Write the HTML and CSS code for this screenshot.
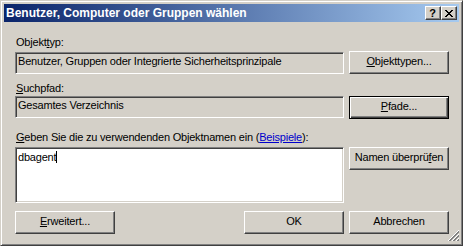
FILE: index.html
```html
<!DOCTYPE html>
<html>
<head>
<meta charset="utf-8">
<link rel="stylesheet" href="styles.css">
</head>
<body>
<div class="window">
  <div class="titlebar">
    <span class="title">Benutzer, Computer oder Gruppen wählen</span>
    <div class="tbtns">
      <div class="tbtn help">?</div>
      <div class="tbtn close">
        <svg width="8" height="7" viewBox="0 0 8 7" shape-rendering="crispEdges">
          <path fill="#000" d="M0 0h2v1H0zM6 0h2v1H6zM1 1h2v1H1zM5 1h2v1H5zM2 2h4v1H2zM3 3h2v1H3zM2 4h4v1H2zM1 5h2v1H1zM5 5h2v1H5zM0 6h2v1H0zM6 6h2v1H6z"/>
        </svg>
      </div>
    </div>
  </div>
  <div class="client">
    <div class="label l1">Objekt<u>t</u>yp:</div>
    <div class="row r1">
      <div class="field">Benutzer, Gruppen oder Integrierte Sicherheitsprinzipale</div>
      <div class="btn"><u>O</u>bjekttypen...</div>
    </div>
    <div class="label l2"><u>S</u>uchpfad:</div>
    <div class="row r2">
      <div class="field">Gesamtes Verzeichnis</div>
      <div class="btn default"><u>P</u>fade...</div>
    </div>
    <div class="label l3"><u>G</u>eben Sie die zu verwendenden Objektnamen ein (<span class="link">Beispiele</span>):</div>
    <div class="row r3">
      <div class="edit">dbagent<span class="caret"></span></div>
      <div class="btn">Namen überprü<u>f</u>en</div>
    </div>
    <div class="row r4">
      <div class="btn"><u>E</u>rweitert...</div>
      <div class="btn ok">OK</div>
      <div class="btn">Abbrechen</div>
    </div>
  </div>
  <svg class="grip" width="12" height="12" viewBox="0 0 12 12" shape-rendering="crispEdges">
    <g stroke-width="1">
      <line x1="11.5" y1="0.5" x2="0.5" y2="11.5" stroke="#fff"/>
      <line x1="11.5" y1="1.5" x2="1.5" y2="11.5" stroke="#808080"/>
      <line x1="11.5" y1="2.5" x2="2.5" y2="11.5" stroke="#808080"/>
      <line x1="11.5" y1="4.5" x2="4.5" y2="11.5" stroke="#fff"/>
      <line x1="11.5" y1="5.5" x2="5.5" y2="11.5" stroke="#808080"/>
      <line x1="11.5" y1="6.5" x2="6.5" y2="11.5" stroke="#808080"/>
      <line x1="11.5" y1="8.5" x2="8.5" y2="11.5" stroke="#fff"/>
      <line x1="11.5" y1="9.5" x2="9.5" y2="11.5" stroke="#808080"/>
      <line x1="11.5" y1="10.5" x2="10.5" y2="11.5" stroke="#808080"/>
    </g>
  </svg>
</div>
</body>
</html>
```
FILE: styles.css
```css
html, body {
  margin: 0;
  padding: 0;
  background: #d4d0c8;
}
body {
  font-family: "Liberation Sans", Arial, sans-serif;
  font-size: 11px;
  letter-spacing: -0.2px;
  color: #000;
}
.window {
  position: relative;
  width: 463px;
  height: 246px;
  box-sizing: border-box;
  background: #d4d0c8;
  border: 1px solid;
  border-color: #d4d0c8 #404040 #404040 #d4d0c8;
  box-shadow: inset 1px 1px #fff, inset -1px -1px #808080;
  padding: 3px;
  display: flex;
  flex-direction: column;
}
.titlebar {
  height: 18px;
  flex: none;
  background: linear-gradient(to right, #0a246a, #a6caf0);
  display: flex;
  align-items: center;
  padding-left: 2px;
}
.title {
  flex: 1;
  color: #fff;
  font-weight: bold;
  font-size: 12px;
  letter-spacing: 0;
  line-height: 18px;
  white-space: nowrap;
}
.tbtns {
  display: flex;
  margin-right: 2px;
}
.tbtn {
  width: 16px;
  height: 14px;
  box-sizing: border-box;
  background: #d4d0c8;
  border: 1px solid;
  border-color: #fff #404040 #404040 #fff;
  box-shadow: inset -1px -1px #808080;
  display: flex;
  align-items: center;
  justify-content: center;
}
.tbtn.help {
  font-weight: bold;
  font-size: 11px;
  letter-spacing: 0;
  line-height: 12px;
  padding-right: 1px;
}
.tbtn.close svg {
  display: block;
  margin-right: 1px;
}
.client {
  flex: 1;
  display: flex;
  flex-direction: column;
  padding: 0 10px 0 11px;
}
.label {
  line-height: 13px;
  padding-left: 1px;
  white-space: nowrap;
}
.l1 { margin-top: 14px; }
.l2 { margin-top: 8px; }
.l3 { margin-top: 12px; }
.row {
  display: flex;
  gap: 5px;
  align-items: flex-start;
}
.r1 { margin-top: 2px; }
.r2 { margin-top: 1px; }
.r3 { margin-top: 3px; }
.r4 { margin-top: 8px; }
.field, .edit {
  flex: 1;
  box-sizing: border-box;
  border: 1px solid;
  border-color: #808080 #fff #fff #808080;
  box-shadow: inset 1px 1px #404040, inset -1px -1px #d4d0c8;
  padding: 2px 2px 0 2px;
  line-height: 13px;
  white-space: nowrap;
  overflow: hidden;
}
.field {
  height: 22px;
  margin-top: 1px;
}
.r2 .field {
  margin-top: 0;
}
.edit {
  height: 56px;
  background: #fff;
  padding-top: 3px;
  padding-left: 2px;
}
.caret {
  display: inline-block;
  width: 1px;
  height: 12px;
  background: #000;
  vertical-align: -2px;
}
.btn {
  width: 100px;
  height: 23px;
  flex: none;
  box-sizing: border-box;
  border: 1px solid;
  border-color: #fff #404040 #404040 #fff;
  box-shadow: inset -1px -1px #808080;
  padding-top: 2px;
  line-height: 14px;
  text-align: center;
  white-space: nowrap;
}
.btn.default {
  border-color: #000;
  box-shadow: inset 1px 1px #fff, inset -1px -1px #404040, inset -2px -2px #808080;
}
.btn.ok {
  margin-left: auto;
}
.link {
  color: #0000cc;
  text-decoration: underline;
}
.grip {
  position: absolute;
  right: 3px;
  bottom: 3px;
}
```
